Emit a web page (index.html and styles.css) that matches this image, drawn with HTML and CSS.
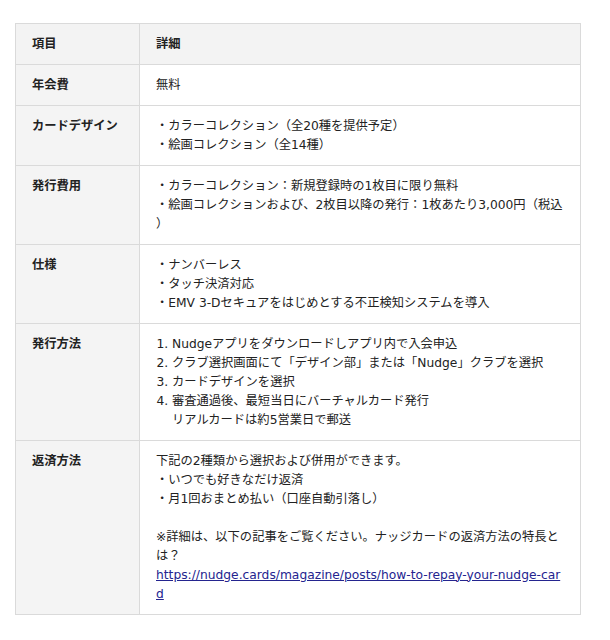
FILE: index.html
```html
<!DOCTYPE html>
<html lang="ja">
<head>
    <meta charset="UTF-8">
    <title>ナッジカード 概要</title>
    <link rel="stylesheet" href="styles.css">
</head>
<body>

<div class="page">
    <table class="spec">
        <colgroup>
            <col class="col-label">
            <col>
        </colgroup>
        <thead>
            <tr>
                <th>項目</th>
                <th>詳細</th>
            </tr>
        </thead>
        <tbody>
            <tr>
                <th>年会費</th>
                <td>無料</td>
            </tr>
            <tr>
                <th>カードデザイン</th>
                <td>・カラーコレクション（全20種を提供予定）<br>・絵画コレクション（全14種）</td>
            </tr>
            <tr>
                <th>発行費用</th>
                <td>・カラーコレクション：新規登録時の1枚目に限り無料<br>・絵画コレクションおよび、2枚目以降の発行：1枚あたり3,000円（税込）</td>
            </tr>
            <tr>
                <th>仕様</th>
                <td>・ナンバーレス<br>・タッチ決済対応<br>・EMV 3-Dセキュアをはじめとする不正検知システムを導入</td>
            </tr>
            <tr>
                <th>発行方法</th>
                <td>
                    <ol class="steps">
                        <li>Nudgeアプリをダウンロードしアプリ内で入会申込</li>
                        <li>クラブ選択画面にて「デザイン部」または「Nudge」クラブを選択</li>
                        <li>カードデザインを選択</li>
                        <li>審査通過後、最短当日にバーチャルカード発行<br>リアルカードは約5営業日で郵送</li>
                    </ol>
                </td>
            </tr>
            <tr>
                <th>返済方法</th>
                <td>下記の2種類から選択および併用ができます。<br>・いつでも好きなだけ返済<br>・月1回おまとめ払い（口座自動引落し）<br><br>※詳細は、以下の記事をご覧ください。ナッジカードの返済方法の特長とは？<br><a href="#" class="link">https://nudge.cards/magazine/posts/how-to-repay-your-nudge-card</a></td>
            </tr>
        </tbody>
    </table>
</div>

</body>
</html>
```

FILE: styles.css
```css
* { margin: 0; padding: 0; box-sizing: border-box; }
body {
    font-family: "DejaVu Sans", "Noto Sans CJK JP", sans-serif;
    font-size: 12.27px; line-height: 19px;
    color: #222; background: #fff;
}

.page { padding: 23px 15px; }

.spec {
    width: 566px;
    table-layout: fixed;
    border-collapse: collapse;
}
.spec .col-label { width: 124px; }
.spec th, .spec td {
    border: 1px solid #dadada;
    padding: 10.5px 16px;
    text-align: left; vertical-align: top;
}
.spec th { background: #f4f4f4; font-weight: 700; }
.spec thead th { background: #f3f3f3; }
.spec td { line-break: anywhere; }

.steps { padding-left: 16px; }

.link { color: #24248f; }
```
